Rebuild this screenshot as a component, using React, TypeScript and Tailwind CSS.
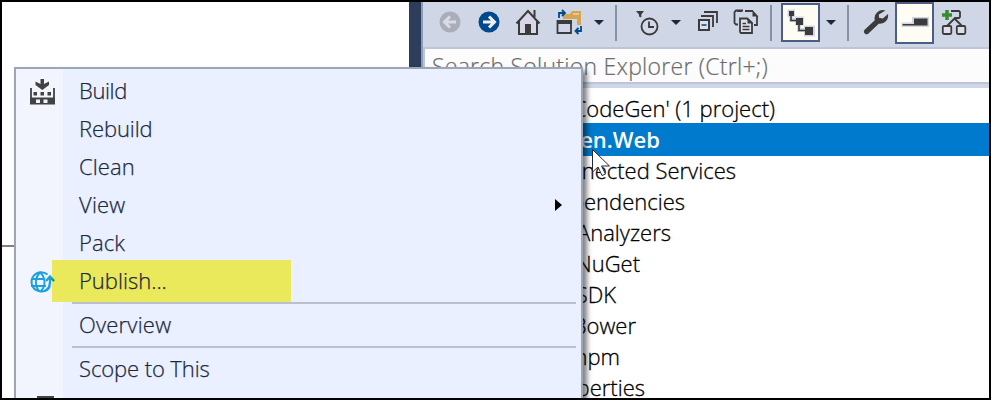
import type { ReactNode } from "react";

type MenuEntry = { label: string; style: string; icon?: ReactNode; submenu?: boolean; marked?: boolean; divider?: boolean };

function Glyph({ box, className = "", children }: { box: string; className?: string; children: ReactNode }) {
  const [, , w, h] = box.split(" ");
  return (
    <svg viewBox={box} width={w} height={h} className={`shrink-0 ${className}`} fill="none">
      {children}
    </svg>
  );
}

const Caret = ({ className }: { className: string }) => (
  <Glyph box="0 0 10 5" className={className}>
    <path d="M0 0H10L5 5Z" fill="#1b293e" />
  </Glyph>
);

const Divider = ({ className }: { className: string }) => (
  <div className={`h-9 w-0.5 shrink-0 bg-[#8591a7] ${className}`} />
);

function Toolbar() {
  return (
    <div className="flex h-[45px] shrink-0 items-start bg-[#cfd6e5]">
      <Glyph box="439 11 22 22" className="ml-4 mt-[9px]">
        <circle cx="450" cy="22" r="10.5" fill="#abaeb8" />
        <path d="M456 22H445M450 16.5L444.5 22L450 27.5" stroke="#d8dce8" strokeWidth="3" />
      </Glyph>
      <Glyph box="478 11 22 22" className="ml-[17px] mt-[9px]">
        <circle cx="489" cy="22" r="10.5" fill="#00498c" />
        <path d="M483 22H494M489 16.5L494.5 22L489 27.5" stroke="#f0eff1" strokeWidth="3" />
      </Glyph>
      <Glyph box="515 8 26 28" className="ml-[15px] mt-1.5">
        <path d="M519 34V22L528 11.5L537 22V34Z" fill="#d8d7e8" />
        <path d="M516.5 23.5L528 11L539.5 23.5M519 21V34H537V21M534.5 17V10" stroke="#3b3b3b" strokeWidth="2" />
        <path d="M525 24H531V34H525Z" fill="#3b3b3b" />
      </Glyph>
      <Glyph box="556 9 27 27" className="ml-[15px] mt-[7px]">
        <path d="M563 14H570L572 11H581V25H577V19H563Z" fill="#d6a553" />
        <path d="M573 14H579" stroke="#e9d1a0" strokeWidth="1.6" />
        <path d="M559 18V13H564M562 10L565 13L562 16" stroke="#00498c" strokeWidth="1.800" />
        <path d="M581 26V31H576M578.5 28L575.5 31L578.5 34" stroke="#00498c" strokeWidth="1.800" />
        <path d="M557.500 21H571V33H557.500Z" fill="#cfd6e5" stroke="#3b3b3b" strokeWidth="1.800" />
        <path d="M557 20H572V24H557Z" fill="#3b3b3b" />
      </Glyph>
      <Caret className="ml-[11px] mt-[18px]" />
      <Divider className="ml-[11px] mt-[3px]" />
      <Glyph box="635 10 24 26" className="ml-[18px] mt-2">
        <path d="M636 11H644L641.300 14.500V17.500L639 16.500V14.500Z" fill="#3b3b3b" />
        <circle cx="649.500" cy="26.500" r="8" stroke="#3b3b3b" strokeWidth="1.8" fill="#d3d7e6" />
        <path d="M649 21.500V27H654" stroke="#3b3b3b" strokeWidth="1.8" />
      </Glyph>
      <Caret className="ml-3 mt-[18px]" />
      <Glyph box="697 10 22 22" className="ml-4 mt-2">
        <path d="M704 12H717V23M701 16H713V27" stroke="#3b3b3b" strokeWidth="1.800" />
        <path d="M699 20H709V30H699Z" stroke="#3b3b3b" strokeWidth="2" fill="#dedfeb" />
        <path d="M701.500 25H706.500" stroke="#00539c" strokeWidth="1.600" />
      </Glyph>
      <Glyph box="733 9 26 27" className="ml-[14px] mt-[7px]">
        <path d="M743 10.500H736L734.500 12V23L736 24.500H738M757 16V25H754M745 11H753" stroke="#3b3b3b" strokeWidth="1.800" />
        <path d="M752.500 10L758.500 16.500H752.500ZM737 10H742V12H737Z" fill="#3b3b3b" />
        <path d="M740 18.500H747L752 23V33H741L740 32Z" stroke="#3b3b3b" strokeWidth="1.800" fill="#dedfeb" />
        <path d="M747.500 17.500L753 23.500H747.500Z" fill="#3b3b3b" />
        <path d="M742.500 23.500H746M742.500 26.500H749.500M742.500 29.500H749.500" stroke="#3b3b3b" strokeWidth="1.300" />
      </Glyph>
      <Divider className="ml-[11px] mt-[3px]" />
      <div className="ml-[9px] mt-px flex h-[39px] w-[39px] shrink-0 border-2 border-[#4c5e83] bg-[#fffcf4]">
        <Glyph box="783 5 35 35">
          <path d="M791 15V20H800M799 22V30H808" stroke="#d2d6e2" strokeWidth="4" />
          <path d="M787.500 9.500H795V17H787.500ZM795 16.500H804V25.500H795ZM804 25.500H815V36.500H804Z" fill="#d2d6e2" />
          <path d="M791 14V20.500H800M799 22V30.500H808" stroke="#3b3b3b" strokeWidth="1.600" />
          <path d="M789 11H794V16H789ZM796 18H803V25H796ZM805 27H813V35H805Z" fill="#3b3b3b" />
        </Glyph>
      </div>
      <Caret className="ml-1.5 mt-[18px]" />
      <Divider className="ml-[11px] mt-[3px]" />
      <Glyph box="863 8 26 28" className="ml-[14px] mt-1.5">
        <path
          d="M885.500 10.500A8.200 8.200 0 0 0 874.800 20.200L864.400 30A2.700 2.700 0 0 0 868.200 33.700L878.700 23.700A8.200 8.200 0 0 0 888 14L882.800 18.400L879 17.800L878.900 14.500Z"
          fill="#3b3b3b"
        />
      </Glyph>
      <div className="ml-1.5 flex h-[42px] w-[39px] shrink-0 border-2 border-[#4c5e83] bg-[#fffcf4]">
        <Glyph box="897 4 35 38">
          <path d="M901.500 22.500H912V17H929V27H901.500Z" fill="#d2d6e2" />
          <path d="M902.500 24H914V18.500H927.500V25.500H902.500Z" fill="#3b3b3b" />
        </Glyph>
      </div>
      <Glyph box="941 8 26 28" className="ml-[7px] mt-1.5">
        <path d="M951 11H959L960 12V17L959 18H955L947 26M954 18L962 26" stroke="#3b3b3b" strokeWidth="1.800" />
        <rect x="942.800" y="26" width="8.500" height="8" rx="1.200" stroke="#3b3b3b" strokeWidth="1.800" fill="#dedfeb" />
        <rect x="956.800" y="26" width="8.500" height="8" rx="1.200" stroke="#3b3b3b" strokeWidth="1.800" fill="#dedfeb" />
        <path d="M947 10V20M942 15H952" stroke="#388a34" strokeWidth="3.500" />
      </Glyph>
    </div>
  );
}

const TREE = [
  { label: "Connected Services", style: "w-[313px]" },
  { label: "Dependencies", style: "w-[262px]" },
  { label: "Analyzers", style: "w-[248px]" },
  { label: "NuGet", style: "w-[217px]" },
  { label: "SDK", style: "w-[193px]" },
  { label: "Bower", style: "w-[213px]" },
  { label: "npm", style: "w-[197px]" },
  { label: "Properties", style: "w-[222px]" },
];

function SolutionExplorer() {
  return (
    <div className="flex w-[566px] flex-col bg-white">
      <Toolbar />
      <div className="flex h-[37px] shrink-0 items-center border-y-2 border-l-2 border-[#bcc6d6] bg-[#fcfcfc] pl-[7px] text-[#6d6d6d]">
        <span className="whitespace-nowrap text-[23px] leading-[30px] tracking-[0.25px] [-webkit-text-stroke:0.2px]">
          Search Solution Explorer (Ctrl+;)
        </span>
      </div>
      <div className="h-1 shrink-0 bg-[#cfd6e5]" />
      <div className="flex flex-col pt-[5px] text-[22px] text-black [-webkit-text-stroke:0.3px]">
        <div className="flex h-[30px] w-[352px] items-center justify-end whitespace-nowrap">Solution 'CodeGen' (1 project)</div>
        <div className="flex h-[33px] items-center bg-[#007acc] text-white">
          <div className="w-[237px] text-right font-semibold [-webkit-text-stroke:0px]">CodeGen.Web</div>
        </div>
        {TREE.map((row) => (
          <div key={row.label} className={`h-[31px] whitespace-nowrap text-right leading-[29px] ${row.style}`}>
            {row.label}
          </div>
        ))}
      </div>
    </div>
  );
}

const BuildIcon = (
  <Glyph box="29 79 27 27">
    <path d="M31 88V104M54 88V104" stroke="#424242" strokeWidth="1.800" />
    <path d="M30 97.500H55V104.500H30Z" fill="#424242" />
    <path d="M36 99.500H40V103H36ZM43.500 99.500H47.500V103H43.500Z" fill="#f2f4fe" />
    <path d="M33.500 92H37V95.500H33.500ZM40.500 92H44V95.500H40.500ZM47.500 92H51V95.500H47.500Z" fill="#424242" />
    <path d="M40.500 79H44V84L49 81.500V85L42.300 90L35.500 85V81.500L40.500 84Z" fill="#424242" />
  </Glyph>
);

const GlobeIcon = (
  <Glyph box="29 269 27 27">
    <path
      d="M47.500 274.500A9.700 9.700 0 1 0 50 286M40 272.500C34.500 278 34.500 286.500 40 292M40 272.500C43 275 44.500 278.500 44.500 282C44.500 286 43 289.500 40 292M31 279H45M31 286H46"
      stroke="#1ba1e2"
      strokeWidth="1.900"
    />
    <path d="M45 291C50 289 50.500 284 50 278M46 281L50 276.500L54 281" stroke="#1ba1e2" strokeWidth="2.300" />
    <path d="M51.500 278.500L54 281" stroke="#16a064" strokeWidth="2.300" />
  </Glyph>
);

const MENU: MenuEntry[] = [
  { label: "Build", style: "tracking-[-0.4px]", icon: BuildIcon },
  { label: "Rebuild", style: "tracking-[-0.1px]" },
  { label: "Clean", style: "tracking-[0.1px]" },
  { label: "View", style: "tracking-[0.2px]", submenu: true },
  { label: "Pack", style: "tracking-[0.1px]" },
  { label: "Publish...", style: "", icon: GlobeIcon, marked: true },
  { label: "Overview", style: "tracking-[0.2px]", divider: true },
  { label: "Scope to This", style: "tracking-[-0.1px]", divider: true },
];

function ContextMenu() {
  return (
    <div className="absolute left-3 top-[65px] h-[340px] w-[569px] border-2 border-[#9ba7b7] bg-[linear-gradient(to_right,#f2f4fe_47px,#eaf0ff_47px)] pt-0.5 shadow-[4px_4px_5px_rgba(0,0,0,0.5)]">
      {MENU.map((item) => (
        <div key={item.label}>
          {item.divider && (
            <div className="flex h-1.5 items-start pl-14 pr-[5px] pt-[3px]">
              <div className="h-0.5 grow bg-[#bcc0cc]" />
            </div>
          )}
          <div className="relative flex h-[38px] items-center">
            {item.marked && <div className="absolute -top-px left-9 h-[42px] w-[239px] bg-[#eae85b]" />}
            <div className="relative flex w-[63px] shrink-0 items-center pl-[13px] pt-[5px]">{item.icon}</div>
            <span className={`relative whitespace-nowrap text-[22px] text-[#1b293e] [-webkit-text-stroke:0.25px] ${item.style}`}>
              {item.label}
            </span>
            {item.submenu && (
              <Glyph box="0 0 7 12" className="ml-auto mr-[19px] mt-0.5">
                <path d="M0 0L7 6L0 12Z" fill="#000" />
              </Glyph>
            )}
          </div>
        </div>
      ))}
      <div className="ml-[21px] mt-[9px] h-2 w-[17px] bg-[#424242]" />
    </div>
  );
}

export default function App() {
  return (
    <div className="relative flex h-[400px] w-[991px] overflow-hidden border-2 border-black bg-white font-['Open_Sans','Noto_Sans',sans-serif] font-light">
      <div className="flex w-[407px] shrink-0 items-start pt-[243px]">
        <div className="h-0.5 w-full bg-[#858080]" />
      </div>
      <div className="w-3 shrink-0 bg-[#2d3d5c]" />
      <div className="w-0.5 shrink-0 bg-[#8e9bbc]" />
      <SolutionExplorer />
      <ContextMenu />
      <svg viewBox="591 147 21 31" width="21" height="31" className="absolute left-[589px] top-[145px]">
        <path d="M592.500 149.500V172L598 167L602 175.500L605.500 174L601.500 166H609.500Z" fill="#fff" stroke="#23283c" />
      </svg>
    </div>
  );
}
